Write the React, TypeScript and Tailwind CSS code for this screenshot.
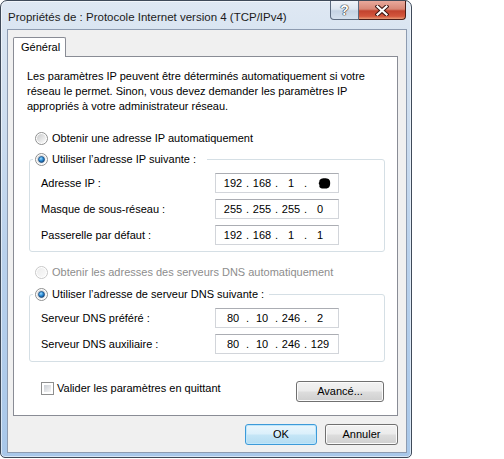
import { useId } from "react";

function Radio({ checked = false, disabled = false }: { checked?: boolean; disabled?: boolean }) {
  const id = useId().replace(/:/g, "");
  return (
    <svg width="13" height="13" viewBox="0 0 13 13" className="shrink-0">
      <defs>
        <linearGradient id={`rf${id}`} x1="0" y1="0" x2="1" y2="1">
          <stop offset="0" stopColor={disabled ? "#ececec" : "#c9cacb"} />
          <stop offset="1" stopColor={disabled ? "#fafafa" : "#fdfdfd"} />
        </linearGradient>
        <radialGradient id={`rd${id}`} cx="0.4" cy="0.35" r="0.75">
          <stop offset="0" stopColor="#9fdcff" />
          <stop offset="0.45" stopColor="#2f8fd8" />
          <stop offset="1" stopColor="#0c3a70" />
        </radialGradient>
      </defs>
      <circle cx="6.5" cy="6.5" r="6" fill="#fff" stroke={disabled ? "#c8c8c8" : "#8e8f8f"} />
      <circle cx="6.5" cy="6.5" r="4.5" fill={`url(#rf${id})`} />
      {checked && (
        <circle cx="6.5" cy="6.5" r="3" fill={`url(#rd${id})`} stroke="#19477a" strokeWidth="0.7" />
      )}
    </svg>
  );
}

function IpBox({ octets, masked = false }: { octets: string[]; masked?: boolean }) {
  return (
    <div className="flex h-[20px] w-[124px] items-center border border-[#d2d5da] border-t-[#abadb3] bg-white pl-[6px]">
      {octets.map((o, i) => (
        <div key={i} className="flex items-center">
          {i > 0 && <span className="w-[7px] text-center">.</span>}
          <span className="flex w-[22px] justify-center">
            {masked && i === 3 ? (
              <svg width="15" height="13" viewBox="0 0 15 13" className="ml-[9px]">
                <path
                  d="M3 1.5 C5 0.2 10 0.2 12.5 1.5 C14.6 3 14.6 9 12.5 11 C10 12.8 5 12.8 2.6 11.4 C1.5 10.6 1.2 9 1.8 8.2 C0.6 7.4 0.6 5.4 1.6 4.8 C1.2 3.5 1.8 2.2 3 1.5 Z"
                  fill="#000"
                />
              </svg>
            ) : (
              o
            )}
          </span>
        </div>
      ))}
    </div>
  );
}

function Row({ label, octets, masked }: { label: string; octets: string[]; masked?: boolean }) {
  return (
    <div className="flex h-[20px] items-center">
      <span className="w-[174px]">{label}</span>
      <IpBox octets={octets} masked={masked} />
    </div>
  );
}

function Button({ children, primary = false, className = "" }: { children: string; primary?: boolean; className?: string }) {
  return (
    <div
      className={
        "flex h-[21px] items-center justify-center rounded-[3px] border " +
        (primary
          ? "border-[#3c9ad9] bg-[linear-gradient(#eaf6fd_0%,#dcf0fb_45%,#c4e5f6_55%,#b4dcf2_100%)] shadow-[inset_0_0_0_1px_#bfe6fb]"
          : "border-[#707070] bg-[linear-gradient(#f2f2f2_0%,#ebebeb_48%,#dddddd_52%,#cfcfcf_100%)] shadow-[inset_0_0_0_1px_#fbfbfb]") +
        " " +
        className
      }
    >
      {children}
    </div>
  );
}

export default function App() {
  return (
    <div className="h-[459px] w-[504px] overflow-hidden bg-white font-['Liberation_Sans',Arial,sans-serif] text-[11px] leading-[15px] text-black">
      <div className="flex h-[458px] w-[412px] flex-col rounded-t-[7px] rounded-b-[5px] border border-[#3f4a59] bg-[linear-gradient(180deg,#dfe8f3_0%,#d8e4f1_8%,#cbdcef_30%,#b9d1ec_55%,#a8c7e9_100%)] shadow-[inset_0_0_0_1px_rgba(255,255,255,0.55)]">
        {/* title bar */}
        <div className="flex h-[28px] shrink-0 items-start">
          <div className="flex-1 pl-[7px] pt-[9px] text-[11.5px] text-[#1b1b1b]">
            Propriétés de : Protocole Internet version 4 (TCP/IPv4)
          </div>
          <div className="mr-[5px] flex h-[19px]">
            <div className="flex w-[29px] items-center justify-center rounded-bl-[4px] border border-t-0 border-[#5b6a7e] bg-[linear-gradient(#f0f4f9_0%,#dde6f0_45%,#c5d3e3_55%,#d5e1ee_100%)]">
              <span className="text-[14px] font-bold leading-none text-white [text-shadow:0_0_1px_#222,0_0_1px_#222,0_0_1px_#222]">
                ?
              </span>
            </div>
            <div className="flex w-[47px] items-center justify-center rounded-br-[4px] border border-l-0 border-t-0 border-[#4a1d17] bg-[linear-gradient(#e9a99c_0%,#d88776_45%,#c2432e_55%,#d3563c_85%,#e79b78_100%)]">
              <svg width="14" height="11" viewBox="0 0 14 11">
                <path d="M2.5 1.5 L11.5 9.5 M11.5 1.5 L2.5 9.5" stroke="#3b1410" strokeWidth="4.2" strokeLinecap="square" />
                <path d="M2.5 1.5 L11.5 9.5 M11.5 1.5 L2.5 9.5" stroke="#fff" strokeWidth="2.2" strokeLinecap="square" />
              </svg>
            </div>
          </div>
        </div>

        {/* client area */}
        <div className="ml-[6px] flex h-[424px] w-[400px] flex-col border border-[#8d9bb0] bg-[#f0f0f0]">
          <div className="pl-[5px] pt-[7px]">
            {/* tab */}
            <div className="relative z-10 -mb-px flex h-[20px] w-[53px] items-center rounded-t-[2px] border border-b-0 border-[#898c95] bg-white pl-[7px]">
              Général
            </div>
            {/* panel */}
            <div className="h-[360px] w-[385px] border border-[#898c95] bg-white">
              <p className="pl-[13px] pt-[12px]">
                Les paramètres IP peuvent être déterminés automatiquement si votre
                <br />
                réseau le permet. Sinon, vous devez demander les paramètres IP
                <br />
                appropriés à votre administrateur réseau.
              </p>

              <div className="mt-[16px] flex h-[16px] items-center gap-[4px] pl-[21px]">
                <Radio />
                <span>Obtenir une adresse IP automatiquement</span>
              </div>

              <fieldset className="ml-[15px] mt-[5px] w-[356px] rounded-[3px] border border-[#d5dfe5] px-[3px] pb-[6px]">
                <legend className="flex h-[16px] items-center gap-[4px] pl-[2px] pr-[11px]">
                  <Radio checked />
                  <span>Utiliser l’adresse IP suivante :</span>
                </legend>
                <div className="mt-[6px] flex flex-col gap-[6px] pl-[8px]">
                  <Row label="Adresse IP :" octets={["192", "168", "1", ""]} masked />
                  <Row label="Masque de sous-réseau :" octets={["255", "255", "255", "0"]} />
                  <Row label="Passerelle par défaut :" octets={["192", "168", "1", "1"]} />
                </div>
              </fieldset>

              <div className="mt-[12px] flex h-[16px] items-center gap-[4px] pl-[21px] text-[#8d8d8d]">
                <Radio disabled />
                <span>Obtenir les adresses des serveurs DNS automatiquement</span>
              </div>

              <fieldset className="ml-[15px] mt-[6px] w-[356px] rounded-[3px] border border-[#d5dfe5] px-[3px] pb-[7px]">
                <legend className="flex h-[16px] items-center gap-[4px] pl-[2px] pr-[5px]">
                  <Radio checked />
                  <span>Utiliser l’adresse de serveur DNS suivante :</span>
                </legend>
                <div className="mt-[6px] flex flex-col gap-[6px] pl-[8px]">
                  <Row label="Serveur DNS préféré :" octets={["80", "10", "246", "2"]} />
                  <Row label="Serveur DNS auxiliaire :" octets={["80", "10", "246", "129"]} />
                </div>
              </fieldset>

              <div className="mt-[19px] flex items-start justify-between pl-[27px] pr-[13px]">
                <div className="flex items-center gap-[3px]">
                  <div className="h-[13px] w-[13px] border border-[#8e8f8f] bg-white p-[2px]">
                    <div className="h-full w-full bg-[linear-gradient(135deg,#cbcfd5,#f6f6f6)]" />
                  </div>
                  <span>Valider les paramètres en quittant</span>
                </div>
                <Button className="w-[88px]">Avancé...</Button>
              </div>
            </div>
          </div>

          <div className="mt-[8px] flex justify-end gap-[8px] pr-[8px]">
            <Button primary className="w-[72px]">OK</Button>
            <Button className="w-[73px]">Annuler</Button>
          </div>
        </div>
      </div>
    </div>
  );
}
